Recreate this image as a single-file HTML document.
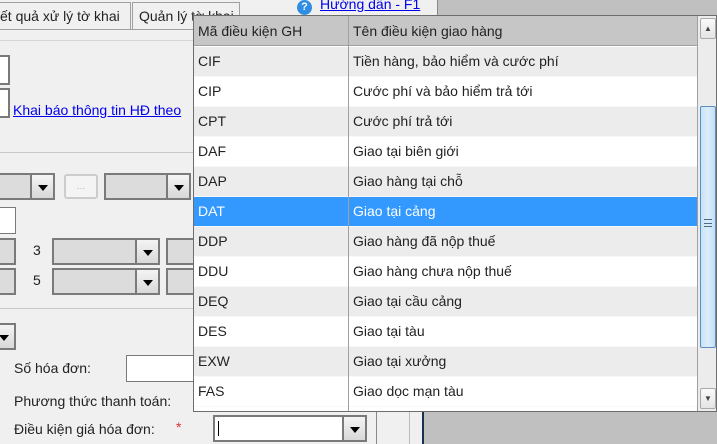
<!DOCTYPE html>
<html><head><meta charset="utf-8"><style>
*{margin:0;padding:0;box-sizing:border-box}
body{width:717px;height:444px;overflow:hidden;background:#f0f0f0;font-family:"Liberation Sans",sans-serif;font-size:14px;color:#222;position:relative}
.a{position:absolute}
.tab{position:absolute;top:2px;height:28px;border:1px solid #a0a0a0;border-bottom:none;background:#f0f0f0;padding:5px 6px;white-space:nowrap;font-size:14px}
.cb{position:absolute;height:27px;border:2px solid #7a7a7a;background:#dcdcdc}
.cb .ar{position:absolute;right:0;top:0;bottom:0;width:23px;border-left:2px solid #7a7a7a;background:linear-gradient(#f4f4f4,#d8d8d8)}
.cb .ar:after{content:"";position:absolute;left:6px;top:10px;border-left:5px solid transparent;border-right:5px solid transparent;border-top:6px solid #000}
.box{position:absolute;height:27px;border:2px solid #7a7a7a;background:#dcdcdc}
.hl{position:absolute;height:1px;background:#c8c8c8;left:0}
#pop{position:absolute;left:193px;top:15px;width:524px;height:397px;border:1px solid #6e6e6e;background:#fff;overflow:hidden}
.r{position:absolute;left:0;width:503px;height:30px;border-bottom:1px solid #f8f8f8}
.r span{position:absolute;top:6px}
.r .c1{left:4px}.r .c2{left:159px}
.vd{position:absolute;left:154px;top:0;width:1px;height:395px;background:#a0a0a0}
</style></head><body>
<div class="tab" style="left:-7px;width:138px">ết quả xử lý tờ khai</div>
<div class="tab" style="left:132px;width:108px">Quản lý tờ khai</div>
<div class="hl" style="top:29px;width:440px;background:#a0a0a0"></div>
<div class="a" style="left:297px;top:0;width:15px;height:15px;border-radius:50%;background:#2f8de4;color:#fff;font-size:11px;font-weight:bold;text-align:center;line-height:15px">?</div>
<div class="a" style="left:320px;top:-4px;color:#0000ee;text-decoration:underline">Hướng dẫn - F1</div>
<div class="a" style="left:437px;top:0;width:280px;height:15px;background:#c0c0c0;border-left:1px solid #888"></div>
<div class="hl" style="top:40px;width:200px;background:#d6d6d6"></div>
<div class="a" style="left:-2px;top:55px;width:12px;height:30px;border:2px solid #7a7a7a;background:#fff"></div>
<div class="a" style="left:-2px;top:88px;width:12px;height:30px;border:2px solid #7a7a7a;background:#fff"></div>
<div class="a" style="left:13px;top:102px;color:#0000ee;text-decoration:underline">Khai báo thông tin HĐ theo</div>
<div class="hl" style="top:152px;width:200px"></div>
<div class="cb" style="left:-4px;top:173px;width:59px"><div class="ar"></div></div>
<div class="a" style="left:64px;top:174px;width:34px;height:25px;border:2px solid #ccc;border-radius:3px;background:#f4f4f4;color:#bbb;font-size:10px;text-align:center;line-height:22px">...</div>
<div class="cb" style="left:104px;top:173px;width:87px"><div class="ar"></div></div>
<div class="a" style="left:-2px;top:207px;width:18px;height:27px;border:1px solid #7a7a7a;background:#fff"></div>
<div class="box" style="left:-4px;top:238px;width:20px"></div>
<div class="box" style="left:-4px;top:268px;width:20px"></div>
<div class="a" style="left:33px;top:242px">3</div>
<div class="a" style="left:33px;top:272px">5</div>
<div class="cb" style="left:52px;top:238px;width:108px"><div class="ar"></div></div>
<div class="cb" style="left:52px;top:268px;width:108px"><div class="ar"></div></div>
<div class="box" style="left:166px;top:238px;width:30px"></div>
<div class="box" style="left:166px;top:268px;width:30px"></div>
<div class="hl" style="top:308px;width:200px"></div>
<div class="cb" style="left:-10px;top:323px;width:26px;background:#f0f0f0"><div class="ar"></div></div>
<div class="a" style="left:14px;top:360px">Số hóa đơn:</div>
<div class="a" style="left:126px;top:355px;width:80px;height:27px;border:1px solid #7a7a7a;background:#fff"></div>
<div class="a" style="left:14px;top:393px">Phương thức thanh toán:</div>
<div class="a" style="left:14px;top:421px">Điều kiện giá hóa đơn:</div>
<div class="a" style="left:176px;top:419px;color:#e03030">*</div>
<div class="cb" style="left:213px;top:415px;width:154px;background:#fff"><div class="ar"></div><div class="a" style="left:3px;top:4px;width:1px;height:15px;background:#000"></div></div>
<div class="a" style="left:376px;top:411px;width:1px;height:33px;background:#888"></div>
<div class="a" style="left:409px;top:411px;width:1px;height:33px;background:#bbb"></div>
<div class="a" style="left:422px;top:411px;width:295px;height:33px;background:#c0c0c0;border-left:2px solid #1a3050"></div>
<div id="pop">
<div class="a" style="left:0;top:0;width:503px;height:30px;background:#c6c6c6;border-bottom:1px solid #a0a0a0"><span class="a" style="left:4px;top:7px">Mã điều kiện GH</span><span class="a" style="left:159px;top:7px">Tên điều kiện giao hàng</span></div>
<div class="r" style="top:31px;background:#ececec"><span class="c1">CIF</span><span class="c2">Tiền hàng, bảo hiểm và cước phí</span></div>
<div class="r" style="top:61px;background:#fff"><span class="c1">CIP</span><span class="c2">Cước phí và bảo hiểm trả tới</span></div>
<div class="r" style="top:91px;background:#ececec"><span class="c1">CPT</span><span class="c2">Cước phí trả tới</span></div>
<div class="r" style="top:121px;background:#fff"><span class="c1">DAF</span><span class="c2">Giao tại biên giới</span></div>
<div class="r" style="top:151px;background:#ececec"><span class="c1">DAP</span><span class="c2">Giao hàng tại chỗ</span></div>
<div class="r" style="top:181px;background:#3399ff;color:#fff"><span class="c1">DAT</span><span class="c2">Giao tại cảng</span></div>
<div class="r" style="top:211px;background:#ececec"><span class="c1">DDP</span><span class="c2">Giao hàng đã nộp thuế</span></div>
<div class="r" style="top:241px;background:#fff"><span class="c1">DDU</span><span class="c2">Giao hàng chưa nộp thuế</span></div>
<div class="r" style="top:271px;background:#ececec"><span class="c1">DEQ</span><span class="c2">Giao tại cầu cảng</span></div>
<div class="r" style="top:301px;background:#fff"><span class="c1">DES</span><span class="c2">Giao tại tàu</span></div>
<div class="r" style="top:331px;background:#ececec"><span class="c1">EXW</span><span class="c2">Giao tại xưởng</span></div>
<div class="r" style="top:361px;background:#fff"><span class="c1">FAS</span><span class="c2">Giao dọc mạn tàu</span></div>
<div class="vd"></div>
<div class="a" style="left:503px;top:0;width:1px;height:395px;background:#a0a0a0"></div>
<div class="a" style="left:504px;top:0;width:19px;height:395px;background:#ececec"></div>
<div class="a" style="left:506px;top:2px;width:16px;height:21px;border:1px solid #aaa;border-radius:2px;background:linear-gradient(#fafafa,#e4e4e4);font-size:8px;text-align:center;line-height:19px;color:#444">▲</div>
<div class="a" style="left:506px;top:90px;width:16px;height:242px;border:1px solid #5b8fbf;border-radius:2px;background:linear-gradient(90deg,#c9e3f7,#dcedfa,#c2def5)"><div class="a" style="left:3px;top:112px;width:8px;height:8px;border-top:1px solid #4a6a8a;border-bottom:1px solid #4a6a8a"></div><div class="a" style="left:3px;top:116px;width:8px;height:1px;background:#4a6a8a"></div></div>
<div class="a" style="left:506px;top:372px;width:16px;height:21px;border:1px solid #aaa;border-radius:2px;background:linear-gradient(#fafafa,#e4e4e4);font-size:8px;text-align:center;line-height:19px;color:#444">▼</div>
</div>
</body></html>
